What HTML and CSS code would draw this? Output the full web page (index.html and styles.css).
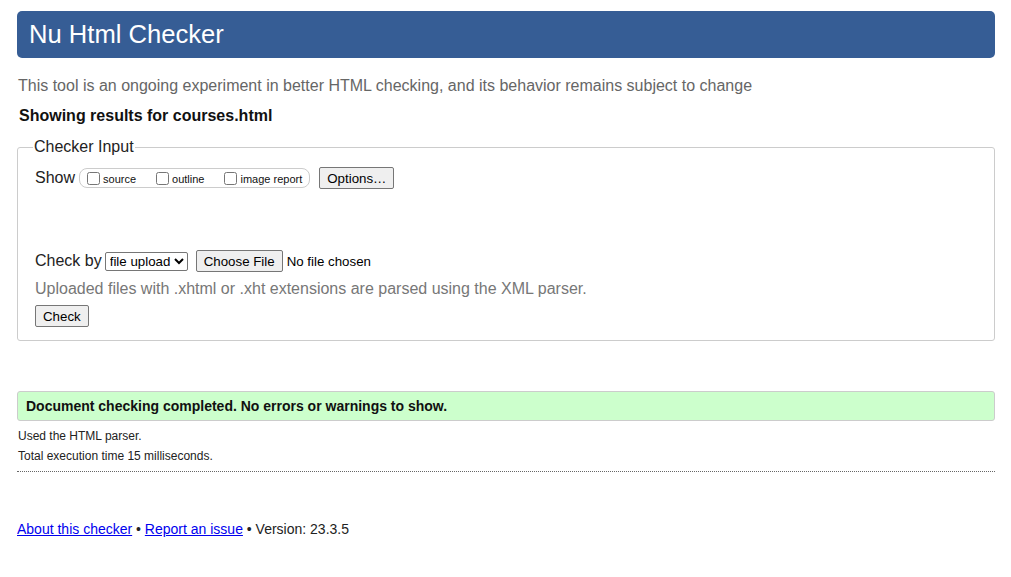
FILE: index.html
```
<!DOCTYPE html>
<html>
<head>
<meta charset="utf-8">
<title>Nu Html Checker</title>
<link rel="stylesheet" href="styles.css">
</head>
<body>
<h1 class="title">Nu Html Checker</h1>
<p class="intro">This tool is an ongoing experiment in better HTML checking, and its behavior remains subject to change</p>
<p class="showing">Showing results for courses.html</p>
<form class="form">
<fieldset class="input">
<legend class="input-legend">Checker Input</legend>
<div class="show-row">
<span class="label">Show</span>
<fieldset class="show-opts">
<label class="opt"><input type="checkbox" class="cb">source</label>
<label class="opt"><input type="checkbox" class="cb">outline</label>
<label class="opt"><input type="checkbox" class="cb">image report</label>
</fieldset>
<button type="button" class="btn">Options…</button>
</div>
<div class="check-row">
<span class="label">Check by</span>
<select class="sel"><option>file upload</option></select>
<button type="button" class="btn btn-file">Choose File</button>
<span class="nofile">No file chosen</span>
</div>
<p class="hint">Uploaded files with .xhtml or .xht extensions are parsed using the XML parser.</p>
<button type="button" class="btn btn-check">Check</button>
</fieldset>
</form>
<p class="success">Document checking completed. No errors or warnings to show.</p>
<p class="details first">Used the HTML parser.</p>
<p class="details">Total execution time 15 milliseconds.</p>
<hr class="sep">
<p class="footer"><a href="#" class="link">About this checker</a> • <a href="#" class="link">Report an issue</a> • Version: 23.3.5</p>
</body>
</html>
```
FILE: styles.css
```
html { background: #fff; }
body {
  margin: 11px 16px 0 17px;
  font-family: "Liberation Sans", Arial, sans-serif;
  font-size: 16px;
  color: #111;
}
.title {
  margin: 0;
  height: 47px;
  line-height: 47px;
  padding-left: 12px;
  background: #365d95;
  color: #fff;
  font-size: 25.6px;
  font-weight: normal;
  border-radius: 5px;
}
.intro {
  margin: 17px 0 0 1px;
  color: #666;
  line-height: 22px;
}
.showing {
  margin: 8px 0 0 2px;
  font-weight: bold;
  line-height: 22px;
}
.form { margin: 10px 0 0; }
.input {
  margin: 0;
  border: 1px solid #ccc;
  border-radius: 3px;
  padding: 0 17px 13px 17px;
}
.input-legend {
  padding: 0 1px;
  margin-left: -2px;
  line-height: 20px;
  color: #222;
}
.show-row {
  display: flex;
  align-items: center;
  margin-top: 9px;
  height: 24px;
}
.label { color: #222; }
.show-opts {
  display: flex;
  align-items: center;
  margin: 0 0 0 4px;
  padding: 0 7px 0 5px;
  height: 18px;
  border: 1px solid #ccc;
  border-radius: 8px;
  min-inline-size: 0;
}
.opt {
  display: flex;
  align-items: center;
  font-size: 11px;
  margin-right: 18px;
  padding-top: 2px;
}
.opt:last-child { margin-right: 0; }
.cb {
  margin: 0 3px 2px 2px;
  width: 13px;
  height: 13px;
}
.btn {
  font-family: "Liberation Sans", Arial, sans-serif;
  font-size: 13.3px;
  color: #000;
  background: #efefef;
  border: 1px solid #767676;
  border-radius: 2px;
  padding: 1px 7px;
  height: 22px;
  margin-left: 9px;
}
.check-row {
  display: flex;
  align-items: center;
  margin-top: 60px;
  height: 22px;
}
.sel {
  font-family: "Liberation Sans", Arial, sans-serif;
  font-size: 13.3px;
  margin-left: 3px;
  height: 19px;
  border: 1px solid #767676;
  border-radius: 2px;
  background: #fff;
  color: #000;
  padding: 0;
}
.btn-file { margin-left: 8px; }
.nofile { font-size: 13.3px; margin-left: 4px; color: #000; }
.hint {
  margin: 6px 0 0;
  color: #777;
  line-height: 22px;
}
.btn-check { margin: 5px 0 0 0; }
.success {
  margin: 50px 0 0;
  background: #ccffcc;
  border: 1px solid #ccc;
  border-radius: 3px;
  padding: 0 8px;
  height: 28px;
  line-height: 28px;
  font-weight: bold;
  font-size: 14px;
}
.details {
  margin: 5px 0 0 1px;
  font-size: 12px;
  line-height: 15px;
  color: #222;
}
.details.first { margin-top: 8px; }
.sep {
  margin: 7px 0 0;
  border: none;
  border-top: 1px dotted #666;
  height: 0;
}
.footer {
  margin: 48px 0 0;
  font-size: 14px;
  line-height: 18px;
  color: #222;
}
.link { color: #0000ee; }
```
